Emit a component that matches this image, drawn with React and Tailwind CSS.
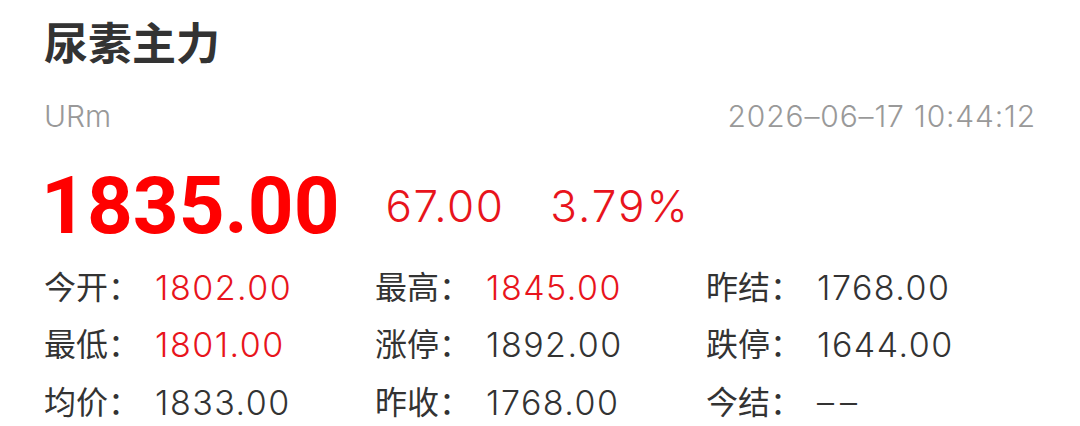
const stats = [
  [
    { label: '今开', value: '1802.00', red: true },
    { label: '最高', value: '1845.00', red: true },
    { label: '昨结', value: '1768.00' },
  ],
  [
    { label: '最低', value: '1801.00', red: true },
    { label: '涨停', value: '1892.00' },
    { label: '跌停', value: '1644.00' },
  ],
  [
    { label: '均价', value: '1833.00' },
    { label: '昨收', value: '1768.00' },
    { label: '今结', value: '––', dash: true },
  ],
]

const sans = "Inter, 'Noto Sans CJK SC', sans-serif"

function Stat({ label, value, red, dash }) {
  return (
    <div className="flex items-center">
      <span className="w-[111px] shrink-0 text-[32px] leading-none text-[#333333]">{label}：</span>
      <span
        className={`text-[34px] font-light leading-none ${dash ? 'tracking-[6px]' : 'tracking-[1.5px]'} ${
          red ? 'text-[#e8141c]' : 'text-[#333333]'
        }`}
      >
        {value}
      </span>
    </div>
  )
}

export default function App() {
  return (
    <div
      className="h-[426px] w-[1080px] overflow-hidden bg-white px-[44px] pt-[20px]"
      style={{ fontFamily: sans }}
    >
      <div className="flex h-[48px] items-center">
        <h1 className="text-[44px] font-bold leading-none text-[#333333]">尿素主力</h1>
      </div>

      <div className="mt-[28px] flex h-[40px] items-center justify-between text-[30px] font-light leading-none text-[#999999]">
        <span>URm</span>
        <span className="tracking-[0.85px]">2026–06–17 10:44:12</span>
      </div>

      <div className="mt-[30px] flex h-[80px] items-center gap-[46px]">
        <span className="-ml-[3px] font-['Roboto'] text-[80px] font-bold leading-none text-[#ff0000]">
          1835.00
        </span>
        <span className="text-[44px] font-light leading-none tracking-[1.5px] text-[#e8141c]">67.00</span>
        <span className="text-[44px] font-light leading-none tracking-[2px] text-[#e8141c]">3.79%</span>
      </div>

      <div className="mt-[13px]">
        {stats.map((row, i) => (
          <div key={i} className="grid h-[57.5px] grid-cols-[331px_331px_1fr] items-center">
            {row.map((s) => (
              <Stat key={s.label} {...s} />
            ))}
          </div>
        ))}
      </div>
    </div>
  )
}
